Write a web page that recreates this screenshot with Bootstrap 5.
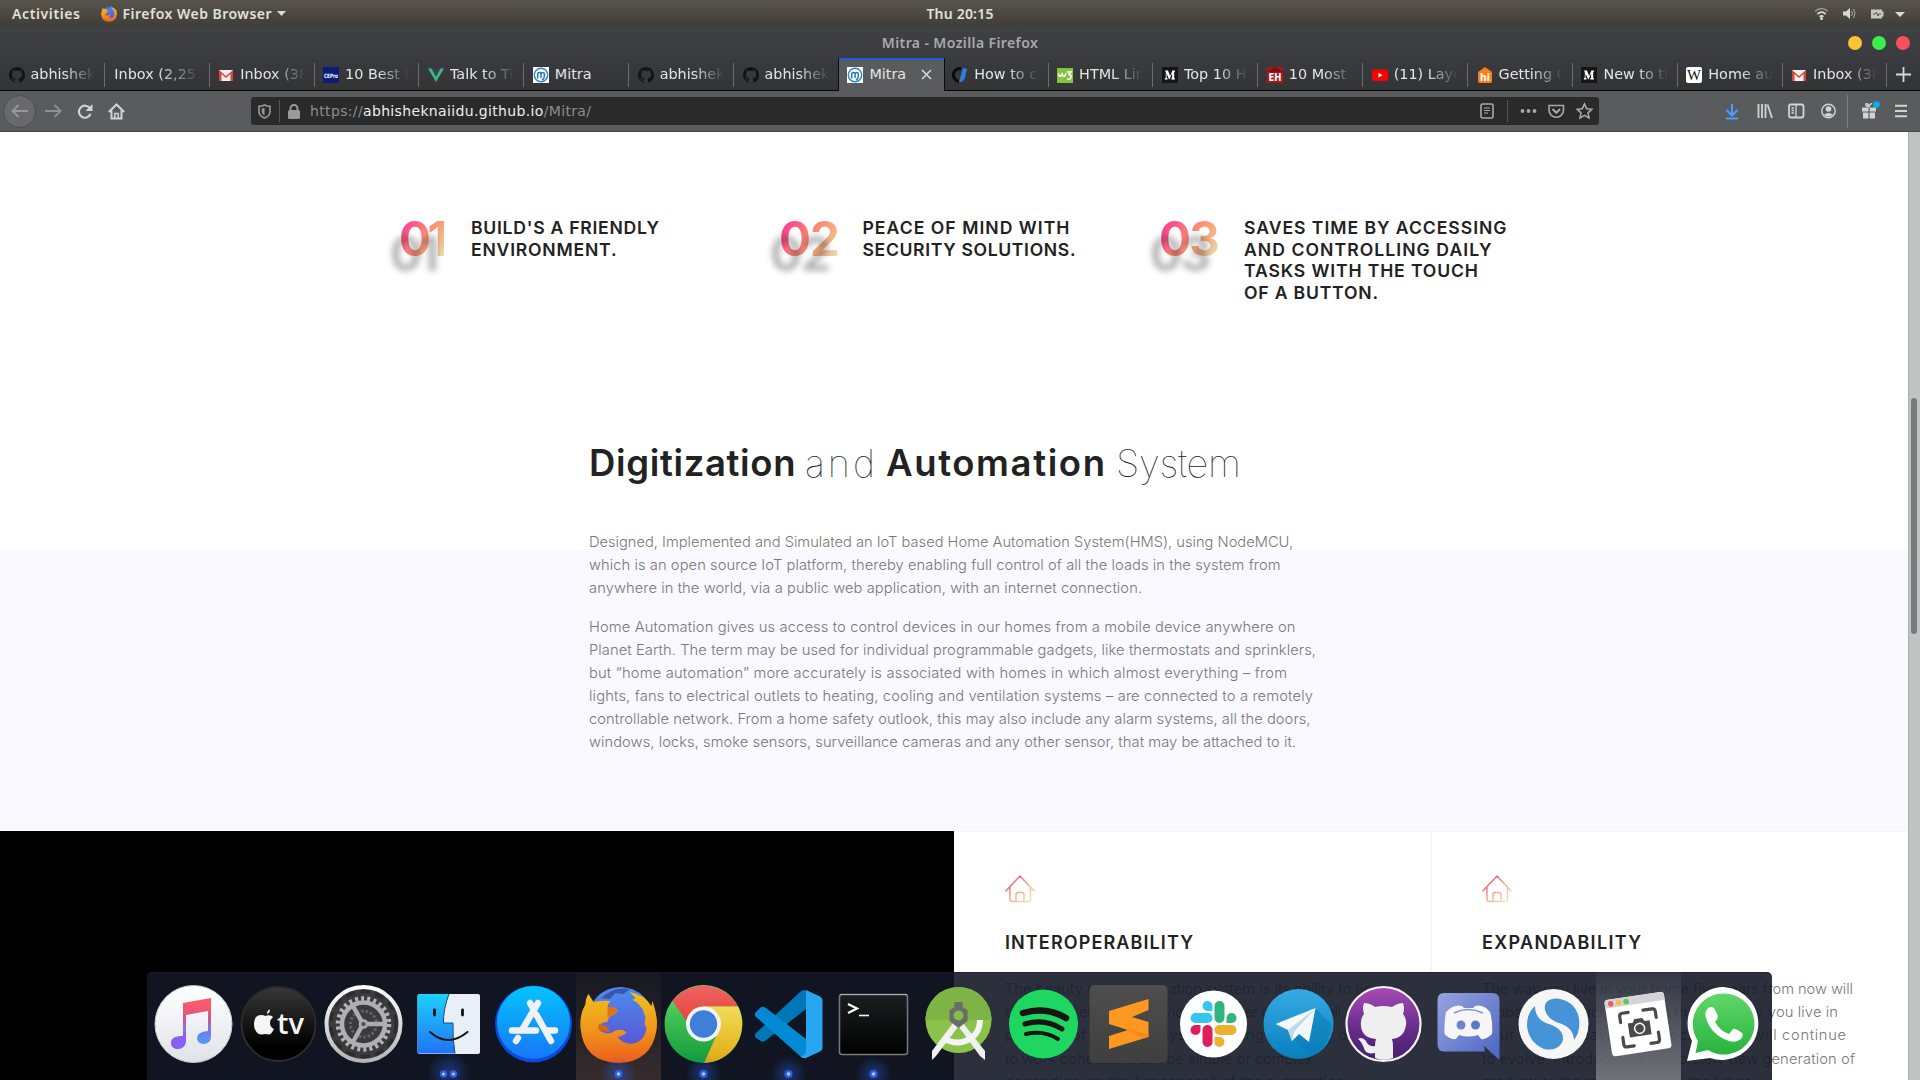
<!DOCTYPE html>
<html lang="en">
<head>
<meta charset="utf-8">
<title>Mitra - Mozilla Firefox</title>
<link href="https://cdn.jsdelivr.net/npm/bootstrap@5.3.0/dist/css/bootstrap.min.css" rel="stylesheet">
<style>
  body{width:1920px;height:1080px;overflow:hidden;font-family:"DejaVu Sans",sans-serif;background:#fff}
  svg{display:block;flex:none}
  .fit{display:inline-block;white-space:nowrap}
  .sysbar{height:27px;background:linear-gradient(#58544c,#3f3d37);color:#e2e0db;font:600 14px/27px "Noto Sans",sans-serif}
  .titlebar{height:31px;background:linear-gradient(#3f4145,#3a3b3f);color:#a9a9a7;font:600 14px/31px "Noto Sans",sans-serif}
  .side{flex:1 1 0;min-width:0}
  .windot{width:14px;height:14px;border-radius:50%}
  .tabstrip{height:33px;background:linear-gradient(#3a3b3f,#343437);border-bottom:1px solid #050505;color:#e4e4e2;font-size:14.4px}
  .tabitem{width:104.87px;height:32px;padding:1px 10px 0 8.5px;position:relative;flex:none}
  .tabitem::after{content:"";position:absolute;right:0;top:5px;bottom:3px;width:1px;background:#6b6c6e}
  .tabitem.on{background:#5a5b5d;height:33px;padding-top:0;box-shadow:inset 0 2px #2259d8,-1px 0 #0c0c0c,1px 0 #0c0c0c}
  .tabitem.on::after,.tabitem.quiet::after{display:none}
  .tablabel{margin-left:6px;white-space:nowrap;overflow:hidden;flex:1 1 0;line-height:31px;
    -webkit-mask-image:linear-gradient(90deg,#000 52%,transparent 100%);mask-image:linear-gradient(90deg,#000 52%,transparent 100%)}
  .tablabel.full{-webkit-mask-image:none;mask-image:none}
  .toolbar{height:41px;background:#5a5b5d;border-bottom:1px solid #47474a;color:#cfcfcf}
  .backbtn{width:33px;height:33px;border-radius:50%;background:#69696b;border:1px solid #4b4b4d}
  .urlbox{width:1348px;height:28px;background:#2a2a2a;border-radius:3px;color:#8d8d8d;font-size:14px}
  .urlbox b{font-weight:400;color:#eee}
  .vline{width:1px;background:#555}
  .viewport{height:948px;overflow:hidden;font-family:Inter,sans-serif}
  .page{width:1908px}
  .scroller{width:12px;background:#c1c3c2;border-left:1px solid #adafae;padding:266px 0 0 2px}
  .thumb{width:6px;height:236px;border-radius:3px;background:#787b7c}
  .steps{height:268px;padding:85px 0 0 401px}
  .step{width:380px}
  .numeral{font-size:47.500px;font-weight:700;line-height:48px;margin-top:-2px;margin-left:-2px;color:transparent;
    background:linear-gradient(125deg,#ff3797 10%,#fb7c78 42%,#f8a67c 65%,#e6e2b4 95%);-webkit-background-clip:text;background-clip:text;
    text-shadow:-9px 15px 6px rgba(0,0,0,.3);flex:none}
  .steptext{font-size:17.600px;font-weight:600;line-height:21.700px;color:#222}
  .about{height:431px;padding:41px 0 0 589px;background:linear-gradient(#fff 149px,#f9f9ff 149px)}
  .headline{font-size:36.500px;line-height:44px;font-weight:600;color:#222;margin:0 0 46px;height:44px;display:flex}
  .headline .thin{font-weight:100;font-size:38px}
  .copy{font-size:14.700px;line-height:23px;font-weight:300;color:#777;margin:0 0 16px}
  .about .copy{position:static}
  .videobox{width:954px;height:249px;background:#000}
  .feature{width:476px;height:249px;border-top:1px solid #f4f4f6;padding:43px 0 0 51px}
  .feature + .feature{width:478px;border-left:2px solid #f6f6f6;padding-left:50px}
  .feature h4{font-size:18px;line-height:22px;font-weight:600;color:#222;margin:29px 0 24px}
  .feature .copy{line-height:23.200px}
  .dock{left:147px;top:972px;width:1625px;height:108px;padding-left:4px;border-radius:5px 5px 0 0;background:rgba(18,24,37,.895);border-top:1px solid rgba(30,30,50,.6)}
  .slot{width:85px;height:108px;flex:none;margin-top:-1px}
  .slot.hot{background:linear-gradient(rgba(80,50,45,.1),rgba(92,66,56,.5))}
  .slot.pale{background:linear-gradient(rgba(130,130,140,.1),rgba(135,135,142,.75))}
</style>
<script src="https://cdn.jsdelivr.net/npm/bootstrap@5.3.0/dist/js/bootstrap.bundle.min.js"></script>
</head>
<body>
<svg width="0" height="0" class="position-absolute">
  <defs>
    <linearGradient id="ffo" x1="0" y1="0" x2="0" y2="1"><stop offset="0" stop-color="#f0c01c"/><stop offset=".5" stop-color="#f09a1c"/><stop offset="1" stop-color="#ee5c1c"/></linearGradient>
    <linearGradient id="ffb" x1="0" y1="0" x2="0" y2="1"><stop offset="0" stop-color="#4b8df0"/><stop offset="1" stop-color="#5b4fd0"/></linearGradient>
    <linearGradient id="warm" x1="0" y1="0" x2="1" y2="1"><stop offset=".1" stop-color="#fb4a84"/><stop offset=".5" stop-color="#f7a584"/><stop offset=".9" stop-color="#efe2c0"/></linearGradient>
    <radialGradient id="halo"><stop offset="0" stop-color="#2f5fe8" stop-opacity=".75"/><stop offset="1" stop-color="#2f5fe8" stop-opacity="0"/></radialGradient>
    <symbol id="octo" viewBox="0 0 16 16"><path d="M8 0C3.58 0 0 3.58 0 8c0 3.54 2.29 6.53 5.47 7.59.4.07.55-.17.55-.38 0-.19-.01-.82-.01-1.49-2.01.37-2.53-.49-2.69-.94-.09-.23-.48-.94-.82-1.13-.28-.15-.68-.52-.01-.53.63-.01 1.08.58 1.23.82.72 1.21 1.87.87 2.33.66.07-.52.28-.87.51-1.07-1.78-.2-3.64-.89-3.64-3.95 0-.87.31-1.59.82-2.15-.08-.2-.36-1.02.08-2.12 0 0 .67-.21 2.2.82.64-.18 1.32-.27 2-.27s1.36.09 2 .27c1.53-1.04 2.2-.82 2.2-.82.44 1.1.16 1.92.08 2.12.51.56.82 1.27.82 2.15 0 3.07-1.87 3.75-3.65 3.95.29.25.54.73.54 1.48 0 1.07-.01 1.93-.01 2.2 0 .21.15.46.55.38A8 8 0 0 0 16 8c0-4.42-3.58-8-8-8z"/></symbol>
    <symbol id="gmail" viewBox="0 0 16 16"><path d="M1 3h14v11H1z" fill="#f1f1f1"/><path d="M1 14V3l7 6 7-6v11h-2.500V7L8 11 3.500 7v7z" fill="#dc4436"/></symbol>
    <symbol id="mitra" viewBox="0 0 16 16"><path d="M0 0h16v16H0z" fill="#fff"/><circle cx="8" cy="8" r="6.700" fill="none" stroke="#2b86c5" stroke-width="1.400"/><path d="M4.700 11.500V7.500Q4.700 5.600 6.400 5.600T8 7.500V11M8 7.500Q8 5.600 9.700 5.600T11.400 7.500V9Q11.400 11.500 9 13" fill="none" stroke="#2277b8" stroke-width="1.500"/></symbol>
    <symbol id="medium" viewBox="0 0 16 16"><path d="M0 0h16v16H0z" fill="#151515"/><path d="M3 3.500h3L8.100 9l2.300-5.500H13v1l-.8.600v6l.8.500v.9H9.200v-.9l.9-.6V6.300L7.600 12.300H7L4.600 6.600v4l1 1.200v.7H2.800v-.7l1-1.200V5.200z" fill="#fff"/></symbol>
    <symbol id="house" viewBox="0 0 30 28"><g fill="none" stroke="url(#warm)" stroke-width="1.500" stroke-linecap="round" stroke-linejoin="round"><path d="M.8 16 15 1 29.200 16M5 12v12.500Q5 26.500 7 26.500H23.500Q25.500 26.500 25.500 24.500V12M11 26V19.500Q11 17.500 13 17.500h4Q19 17.500 19 19.500V26"/></g></symbol>
    <symbol id="fox" viewBox="0 0 78 78"><circle cx="41" cy="34" r="33" fill="url(#ffb)"/><path d="M20 14Q32 0 50 3L44 8 36 7 30 13 22 12z" fill="#3c52ae"/><path d="M9 8 14 16Q24 14 31 15 28 18 28 21 36 21 38 24 38 27 30 31 28 34 28 36 20 36 19 42 22 49 32 47 39 41 47 46 46 49 38 51 42 57 52 58 65 56 67 42L65 38 66 31 63 23 58 17 53 14 56 12 50 6Q64 8 72 20L73 15Q79 32 77 44 72 76 39 77 4 76 1 42 0 28 6 18 6 12 9 8z" fill="url(#ffo)"/><path d="M28 21Q36 20 38 24 37 28 28 32z" fill="#e07414"/><path d="M19 38Q28 38 30 46L19 44z" fill="#dd6512"/></symbol>
  </defs>
</svg>

<header>
  <div class="sysbar d-flex">
    <div class="side d-flex align-items-center">
      <span class="fit" style="margin-left:12px" data-w="68">Activities</span>
      <svg style="margin-left:20px" width="16" height="16" viewBox="0 0 78 78"><use href="#fox"/></svg>
      <span class="fit" style="margin-left:6px" data-w="149">Firefox Web Browser</span>
      <svg style="margin-left:5px" width="9" height="5"><path d="M0 0h9L4.500 5z" fill="#dcdad5"/></svg>
    </div>
    <span class="fit" data-w="67">Thu 20:15</span>
    <div class="side d-flex align-items-center justify-content-end">
      <svg width="106" height="20" viewBox="0 0 106 20"><g fill="none" stroke="#dcdad5" stroke-width="1.600"><path d="M1 7.500Q7.500 1.500 14 7.500" opacity=".5"/><path d="M3.300 10.200Q7.500 6.200 11.700 10.200M5.500 12.800Q7.500 10.800 9.500 12.800"/></g><circle cx="7.500" cy="14.500" r="1.500" fill="#dcdad5"/><path d="M29 7.500h3l4-3.500v11l-4-3.500h-3z" fill="#dcdad5"/><path d="M37.500 7q2 2.500 0 5M39.500 5q3 4.500 0 9" stroke="#b5b3ad" fill="none"/><path d="M57 5.500h11v2h1.500v5H68v2H57z" fill="#c9c7c2"/><path d="M59 10h2l1.500-2 1.500 4 1-2h2" stroke="#55524a" fill="none"/><path d="M81 8h10l-5 5z" fill="#dcdad5"/></svg>
    </div>
  </div>
  <div class="titlebar d-flex">
    <div class="side"></div>
    <span class="fit" data-w="156">Mitra - Mozilla Firefox</span>
    <div class="side d-flex align-items-center justify-content-end" style="gap:10px">
      <i class="windot" style="background:#fbc531"></i><i class="windot" style="background:#3eed4b"></i><i class="windot" style="background:#f7525b;margin-right:10px"></i>
    </div>
  </div>
  <nav class="tabstrip d-flex">
    <div class="tabitem d-flex align-items-center"><svg width="16" height="16" fill="#141416"><use href="#octo"/></svg><span class="tablabel">abhishek</span></div>
    <div class="tabitem d-flex align-items-center"><span class="tablabel" style="margin-left:1px">Inbox (2,251)</span></div>
    <div class="tabitem d-flex align-items-center"><svg width="16" height="16"><use href="#gmail"/></svg><span class="tablabel">Inbox (38)</span></div>
    <div class="tabitem d-flex align-items-center"><svg width="16" height="16"><path d="M0 0h16v16H0z" fill="#0a1e78"/><text x="1" y="10.500" font-size="6" font-weight="700" fill="#fff" textLength="14" lengthAdjust="spacingAndGlyphs">CEPro</text></svg><span class="tablabel">10 Best H</span></div>
    <div class="tabitem d-flex align-items-center"><svg width="16" height="16"><path d="M0 1.500h3.500L8 9.500l4.500-8H16L8 15z" fill="#41b883"/><path d="M3.500 1.500H6.200L8 4.700 9.800 1.500h2.700L8 9.500z" fill="#35495e"/></svg><span class="tablabel">Talk to Ti</span></div>
    <div class="tabitem d-flex align-items-center"><svg width="16" height="16"><use href="#mitra"/></svg><span class="tablabel full">Mitra</span></div>
    <div class="tabitem d-flex align-items-center"><svg width="16" height="16" fill="#141416"><use href="#octo"/></svg><span class="tablabel">abhishek</span></div>
    <div class="tabitem quiet d-flex align-items-center"><svg width="16" height="16" fill="#141416"><use href="#octo"/></svg><span class="tablabel">abhishek</span></div>
    <div class="tabitem on d-flex align-items-center"><svg width="16" height="16"><use href="#mitra"/></svg><span class="tablabel full">Mitra</span><svg width="11" height="11" style="margin-right:2px"><path d="M1 1l9 9M10 1l-9 9" stroke="#d8d8d8" stroke-width="1.500"/></svg></div>
    <div class="tabitem d-flex align-items-center"><svg width="16" height="16"><path d="M9 1.500A6.500 6.500 0 1 0 7 14.500" fill="none" stroke="#0b0b0d" stroke-width="3"/><path d="M11 1 7 15h2.500l3-3 2.500-10q-2-1-4-1z" fill="#2f7de0"/></svg><span class="tablabel">How to cr</span></div>
    <div class="tabitem d-flex align-items-center"><svg width="16" height="16"><path d="M0 1h16v15H0z" fill="#84c341"/><path d="M1.500 6.500Q2 10 4 9L5 7Q6 10 8 9L9 6M10 5h4L12 7.500Q14.500 8 14 10.500 13 13 10 12" fill="none" stroke="#fff" stroke-width="1.500"/></svg><span class="tablabel">HTML Lin</span></div>
    <div class="tabitem d-flex align-items-center"><svg width="16" height="16"><use href="#medium"/></svg><span class="tablabel">Top 10 H</span></div>
    <div class="tabitem d-flex align-items-center"><svg width="16" height="16"><path d="M0 0h16v16H0z" fill="#a91616"/><path d="M0 5 8 0 16 5z" fill="#7d1010"/><text x="1.500" y="13.500" font-size="10.500" font-weight="700" fill="#fff" textLength="13" lengthAdjust="spacingAndGlyphs">EH</text></svg><span class="tablabel">10 Most I</span></div>
    <div class="tabitem d-flex align-items-center"><svg width="16" height="16"><rect y="2.500" width="16" height="11.500" rx="2.500" fill="#f00"/><path d="M6.500 5.800v4.800l4-2.400z" fill="#fff"/></svg><span class="tablabel">(11) Layo</span></div>
    <div class="tabitem d-flex align-items-center"><svg width="16" height="16"><path d="M1 5 8 0l7 5v9q0 2-2 2H3q-2 0-2-2z" fill="#f97f16"/><text x="3" y="13.500" font-size="11" font-weight="700" fill="#fff" textLength="10" lengthAdjust="spacingAndGlyphs">hi</text></svg><span class="tablabel">Getting C</span></div>
    <div class="tabitem d-flex align-items-center"><svg width="16" height="16"><use href="#medium"/></svg><span class="tablabel">New to th</span></div>
    <div class="tabitem d-flex align-items-center"><svg width="16" height="16"><rect width="16" height="16" rx="2" fill="#fff"/><text x="1" y="12.800" font-family="Liberation Serif,serif" font-size="14" fill="#111" textLength="14" lengthAdjust="spacingAndGlyphs">W</text></svg><span class="tablabel">Home aut</span></div>
    <div class="tabitem d-flex align-items-center"><svg width="16" height="16"><use href="#gmail"/></svg><span class="tablabel">Inbox (38)</span></div>
    <div class="d-flex align-items-center" style="padding-left:8.500px"><svg width="15" height="15"><path d="M7.500 0v15M0 7.500h15" stroke="#d8d8d8" stroke-width="1.800"/></svg></div>
  </nav>
  <div class="toolbar d-flex align-items-center">
    <div class="backbtn d-flex align-items-center justify-content-center" style="margin-left:3px"><svg width="17" height="14" fill="none" stroke="#98989a" stroke-width="1.800"><path d="M17 7H1.500M7.500 1l-6 6 6 6"/></svg></div>
    <svg style="margin-left:9px" width="17" height="14" fill="none" stroke="#909092" stroke-width="1.800"><path d="M0 7h15.500M9.500 1l6 6-6 6"/></svg>
    <svg style="margin-left:15px" width="16" height="15" fill="none" stroke="#d3d3d3" stroke-width="2.200"><path d="M13 4.500A6 6 0 1 0 13.500 10"/><path d="M15.500 0v7h-7z" fill="#d3d3d3" stroke="none"/></svg>
    <svg style="margin-left:15px" width="17" height="17" fill="none" stroke="#d3d3d3" stroke-width="2"><path d="M.8 9 8.500 1.500 16.200 9M3.500 7.500V15.500h10V7.500"/><path d="M6.800 15.500v-5h3.400v5" stroke-width="1.500"/></svg>
    <div class="urlbox d-flex align-items-center" style="margin-left:126px">
      <svg style="margin-left:7px" width="13" height="15"><path d="M6.500 1Q9 2.300 12 2.300V7.500Q12 12 6.500 14 1 12 1 7.500V2.300Q4 2.300 6.500 1z" fill="none" stroke="#9a9a9a" stroke-width="1.600"/><path d="M6.500 4v7.500Q3.800 10 3.800 7.500v-3z" fill="#9a9a9a"/></svg>
      <i class="vline" style="height:22px;margin-left:8px"></i>
      <svg style="margin-left:8px" width="12" height="15"><rect y="6" width="12" height="9" rx="1.500" fill="#9a9a9a"/><path d="M2.500 6.500V4.500a3.500 3.500 0 0 1 7 0v2" fill="none" stroke="#9a9a9a" stroke-width="2"/></svg>
      <span class="fit" data-w="281" style="margin-left:10px">https://<b>abhisheknaiidu.github.io</b>/Mitra/</span>
      <svg class="ms-auto me-1" style="margin-right:1px!important" width="118" height="28" fill="none" stroke="#a8a8a8" stroke-width="1.600"><rect x="1" y="7" width="12" height="14" rx="1.500"/><path d="M4 11h6M4 13.500h6M4 16h4" stroke-width="1.200"/><path d="M27.500 3v22" stroke="#555" stroke-width="1"/><g fill="#a8a8a8" stroke="none"><circle cx="42.500" cy="14" r="1.900"/><circle cx="48.500" cy="14" r="1.900"/><circle cx="54.500" cy="14" r="1.900"/></g><path d="M69 8.500h14.500V13a7.250 7.250 0 0 1-14.500 0z"/><path d="M72.500 12l3.800 3.800 3.800-3.800" stroke-width="2"/><path d="M104.500 7l2.200 4.700 5.100.6-3.800 3.500 1 5.100-4.500-2.600-4.500 2.600 1-5.100-3.800-3.500 5.100-.6z"/></svg>
    </div>
    <svg style="margin-left:126px" width="190" height="40" fill="none" stroke="#d3d3d3" stroke-width="1.800"><path d="M7 13v11M1.500 19l5.500 5.500 5.500-5.500" stroke="#45a1ff" stroke-width="2"/><path d="M1 27.500h12" stroke="#45a1ff" stroke-width="2"/><path d="M33.500 13v14M37 13v14M40.500 13v14M42.500 13.500l4.500 13.500" stroke-width="1.800"/><rect x="64" y="13.500" width="14.500" height="13" rx="2"/><path d="M71 13v14M66.500 17h2.500M66.500 19.500h2.500M66.500 22h2.500" stroke-width="1.300"/><circle cx="103.500" cy="20" r="6.700" stroke-width="1.400"/><circle cx="103.500" cy="18" r="2.800" fill="#d3d3d3" stroke="none"/><path d="M99 23.500q4.500-3 9 0-4.500 4.500-9 0z" fill="#d3d3d3" stroke="none"/><path d="M122.500 4v33" stroke="#7d7d7f" stroke-width="1"/><g fill="#d3d3d3" stroke="none"><path d="M137 16.500h6.400v4H137zM144.600 16.500h6.400v4h-6.400zM138 21.500h5.400v6H138zM144.600 21.500h5.400v6h-5.400z"/></g><path d="M144 16q-4-1-3-3 2-1 3 3 1-4 3-3" stroke-width="1.500"/><circle cx="151.500" cy="13.500" r="3.300" fill="#00aff5" stroke="none"/><path d="M170 14.800h12M170 20h12M170 25.200h12" stroke-width="2"/></svg>
  </div>
</header>

<main class="viewport d-flex">
  <div class="page">
    <section class="steps d-flex">
      <div class="step d-flex"><div style="width:70px"><span class="numeral fit" data-w="49">01</span></div>
        <div class="steptext"><span class="fit" data-w="188">BUILD'S A FRIENDLY</span><br><span class="fit" data-w="145.500">ENVIRONMENT.</span></div></div>
      <div class="step d-flex"><div style="width:81.500px"><span class="numeral fit" data-w="61">02</span></div>
        <div class="steptext"><span class="fit" data-w="207">PEACE OF MIND WITH</span><br><span class="fit" data-w="213">SECURITY SOLUTIONS.</span></div></div>
      <div class="step d-flex"><div style="width:83px"><span class="numeral fit" data-w="61">03</span></div>
        <div class="steptext"><span class="fit" data-w="262.500">SAVES TIME BY ACCESSING</span><br><span class="fit" data-w="247.500">AND CONTROLLING DAILY</span><br><span class="fit" data-w="234">TASKS WITH THE TOUCH</span><br><span class="fit" data-w="134">OF A BUTTON.</span></div></div>
    </section>
    <section class="about">
      <h2 class="headline"><span class="fit" data-w="206.500" style="width:216px">Digitization</span><span class="fit thin" data-w="70" style="width:81px">and</span><span class="fit" data-w="219" style="width:230px">Automation</span><span class="fit thin" data-w="125">System</span></h2>
      <p class="copy"><span class="fit" data-w="704">Designed, Implemented and Simulated an IoT based Home Automation System(HMS), using NodeMCU,</span><br><span class="fit" data-w="691.500">which is an open source IoT platform, thereby enabling full control of all the loads in the system from</span><br><span class="fit" data-w="553">anywhere in the world, via a public web application, with an internet connection.</span></p>
      <p class="copy"><span class="fit" data-w="706.500">Home Automation gives us access to control devices in our homes from a mobile device anywhere on</span><br><span class="fit" data-w="727">Planet Earth. The term may be used for individual programmable gadgets, like thermostats and sprinklers,</span><br><span class="fit" data-w="698">but “home automation” more accurately is associated with homes in which almost everything – from</span><br><span class="fit" data-w="724">lights, fans to electrical outlets to heating, cooling and ventilation systems – are connected to a remotely</span><br><span class="fit" data-w="721.500">controllable network. From a home safety outlook, this may also include any alarm systems, all the doors,</span><br><span class="fit" data-w="707">windows, locks, smoke sensors, surveillance cameras and any other sensor, that may be attached to it.</span></p>
    </section>
    <section class="d-flex">
      <div class="videobox"></div>
      <article class="feature">
        <svg width="30" height="28"><use href="#house"/></svg>
        <h4><span class="fit" data-w="188">INTEROPERABILITY</span></h4>
        <p class="copy"><span class="fit" data-w="367">The beauty of an automation system is its ability to tie</span><br><span class="fit" data-w="336">connected electronic devices together or so that all</span><br><span class="fit" data-w="388">products of the home system, letting the many devices</span><br><span class="fit" data-w="312">to work cohesively can be simple or complex,</span><br><span class="fit" data-w="340">depending on the "openness" of the automation</span></p>
      </article>
      <article class="feature">
        <svg width="30" height="28"><use href="#house"/></svg>
        <h4><span class="fit" data-w="159">EXPANDABILITY</span></h4>
        <p class="copy"><span class="fit" data-w="371">The way you live in your home five years from now will</span><br><span class="fit" data-w="356">probably be much different than the way you live in</span><br><span class="fit" data-w="364">your home today. Home technology will continue</span><br><span class="fit" data-w="373">to evolve, introducing a completely new generation of</span><br><span class="fit" data-w="270">products to the marketplace. In the future</span></p>
      </article>
    </section>
  </div>
  <div class="scroller"><div class="thumb"></div></div>
</main>

<nav class="dock d-flex position-absolute">
  <div class="slot"><svg width="85" height="108">
    <defs><linearGradient id="m1" x1="0" y1="0" x2="0" y2="1"><stop offset="0" stop-color="#fff"/><stop offset="1" stop-color="#dfe3e8"/></linearGradient><linearGradient id="m2" x1="0" y1="26" x2="0" y2="77" gradientUnits="userSpaceOnUse"><stop offset=".1" stop-color="#fb5b68"/><stop offset=".4" stop-color="#d4568c"/><stop offset=".65" stop-color="#6f7df0"/><stop offset="1" stop-color="#4aa4f5"/></linearGradient></defs>
    <circle cx="42.500" cy="52" r="38.500" fill="url(#m1)" stroke="#c6cbd1" stroke-width="1"/><path d="M32 31 60 26V64Q60 72 52 72 46 71 46 66 46 60 57 59V39L35 43V69Q34 77 26 77 20 76 20 71 20 64 32 64z" fill="url(#m2)"/><path d="M32 64V60H35V69Q34 77 26 77 20 76 20 71 20 64 32 64z" fill="#8a60f4"/></svg></div>
  <div class="slot"><svg width="85" height="108"><defs><linearGradient id="tv" x1="0" y1="0" x2="0" y2="1"><stop offset="0" stop-color="#383838"/><stop offset=".8" stop-color="#000"/></linearGradient></defs><circle cx="42.500" cy="52" r="37" fill="url(#tv)" stroke="#2c2c2e" stroke-width="2"/><path d="M31 42Q31 38 34 37.500 34 41 31 42zM18 53Q18 43 25 43 28 43 29.500 44 32 42.500 36 44L37 45.500Q34 47 34 51 34 55 38 57 35 63 32.500 62.500 29 61.500 26 62.500 23 63 20.500 60 18 57 18 53z" fill="#f5f5f5"/><text x="41" y="62" font-family="Open Sans,sans-serif" font-size="29" font-weight="600" fill="#f5f5f5" textLength="27" lengthAdjust="spacingAndGlyphs">tv</text></svg></div>
  <div class="slot"><svg width="85" height="108"><defs><linearGradient id="rg" x1="0" y1="0" x2="0" y2="1"><stop offset="0" stop-color="#fff"/><stop offset="1" stop-color="#b5b5b5"/></linearGradient></defs><circle cx="42.500" cy="52" r="37" fill="#3b3b3d" stroke="url(#rg)" stroke-width="4"/><circle cx="42.500" cy="52" r="32.500" fill="none" stroke="#2c2c2e" stroke-width="3" stroke-dasharray="9 6"/><circle cx="42.500" cy="52" r="13" fill="none" stroke="#626264" stroke-width="3" stroke-dasharray="2.500 2"/><circle cx="42.500" cy="52" r="25.500" fill="none" stroke="#b4b4b4" stroke-width="4.500" stroke-dasharray="3 3.160"/><circle cx="42.500" cy="52" r="21.500" fill="none" stroke="#b0b0b0" stroke-width="4.500"/><path d="M43 52H64M42 52 32 34M42 52 32 70" stroke="#adadad" stroke-width="4.500"/><circle cx="42.500" cy="52" r="3.600" fill="#59595b" stroke="#adadad" stroke-width="2.500"/></svg></div>
  <div class="slot"><svg width="85" height="108"><defs><linearGradient id="fn" x1="0" y1="0" x2="0" y2="1"><stop offset="0" stop-color="#1dd0fc"/><stop offset="1" stop-color="#2173f6"/></linearGradient></defs><rect x="11.500" y="22" width="62.500" height="60" rx="2" fill="#e9eff6"/><path d="M13 22H43Q37 38 37.500 51H47Q46.500 68 49 81.500H13Q11.500 81.500 11.500 80V23.500Q11.500 22 13 22z" fill="url(#fn)"/><path d="M43 22Q37 38 37.500 51H47Q46.500 68 49 81.500" fill="none" stroke="#1b4b78" stroke-width="1"/><path d="M28.500 38v5M56.500 38v5" stroke="#111" stroke-width="2.800" stroke-linecap="round"/><path d="M24 60Q42 76 61.500 60" fill="none" stroke="#111" stroke-width="2" stroke-linecap="round"/><circle cx="42.500" cy="101" r="22" fill="url(#halo)" opacity=".6"/><circle cx="37.500" cy="102" r="3.700" fill="#2c5fe0"/><circle cx="37.500" cy="102" r="1.600" fill="#a9c6ff"/><circle cx="47.500" cy="102" r="3.700" fill="#2c5fe0"/><circle cx="47.500" cy="102" r="1.600" fill="#a9c6ff"/></svg></div>
  <div class="slot"><svg width="85" height="108"><defs><linearGradient id="as" x1="0" y1="0" x2="0" y2="1"><stop offset="0" stop-color="#04c4fe"/><stop offset="1" stop-color="#1677f7"/></linearGradient></defs><circle cx="42.500" cy="52" r="38.500" fill="#0d49dc"/><circle cx="42.500" cy="50.500" r="36.500" fill="url(#as)"/><g stroke="#eef1f6" stroke-width="6.500" stroke-linecap="round"><path d="M47 31 31 58M27 66 25 69"/><path d="M39 31 43 38M45.500 43 60 69"/><path d="M21 58.500H45M55 58.500H64"/></g></svg></div>
  <div class="slot hot"><svg width="85" height="108"><use href="#fox" x="3.500" y="14" width="78" height="78"/><circle cx="42.500" cy="102" r="18" fill="url(#halo)" opacity=".6"/><circle cx="42.500" cy="102" r="4" fill="#2c5fe0"/><circle cx="42.500" cy="102" r="1.800" fill="#a9c6ff"/></svg></div>
  <div class="slot"><svg width="85" height="108"><defs><linearGradient id="c1" x1="0" y1="0" x2="0" y2="1"><stop offset="0" stop-color="#ef6462"/><stop offset="1" stop-color="#e5443b"/></linearGradient><linearGradient id="c2" x1="0" y1="0" x2="0" y2="1"><stop offset="0" stop-color="#64dc62"/><stop offset="1" stop-color="#119a3d"/></linearGradient><linearGradient id="c3" x1="0" y1="0" x2="0" y2="1"><stop offset="0" stop-color="#f2dc57"/><stop offset="1" stop-color="#e2a912"/></linearGradient></defs><circle cx="42.500" cy="52" r="39" fill="url(#c2)"/><path d="M11.500 29A39 39 0 0 1 77 34.500H42.500L25.500 49z" fill="url(#c1)"/><path d="M77 34.500A39 39 0 0 1 43 91L56.500 61 42.500 34.500z" fill="url(#c3)"/><circle cx="42.500" cy="52" r="17.500" fill="#f3f5fa"/><circle cx="42.500" cy="52" r="13.700" fill="#3f7fda"/><circle cx="42.500" cy="102" r="18" fill="url(#halo)" opacity=".6"/><circle cx="42.500" cy="102" r="4" fill="#2c5fe0"/><circle cx="42.500" cy="102" r="1.800" fill="#a9c6ff"/></svg></div>
  <div class="slot"><svg width="85" height="108"><path d="M9 62 54 20Q57 17 60 18.500V37L19 69Q16 71 13 68L9 65z" fill="#0277b8"/><path d="M9 41 13 37Q16 33 20 36L60 67V86Q57 86 54 84L9 44z" fill="#0489d4"/><path d="M60 18 74 24.500Q76.500 26 76.500 28V76Q76.500 78 74 79.500L60 86Q57 87 54 84 60 84 60 78z" fill="#27a6f1"/><circle cx="42.500" cy="102" r="18" fill="url(#halo)" opacity=".6"/><circle cx="42.500" cy="102" r="4" fill="#2c5fe0"/><circle cx="42.500" cy="102" r="1.800" fill="#a9c6ff"/></svg></div>
  <div class="slot"><svg width="85" height="108"><defs><linearGradient id="tm" x1="0" y1="0" x2="0" y2="1"><stop offset="0" stop-color="#1d1e20"/><stop offset="1" stop-color="#000"/></linearGradient></defs><rect x="8.500" y="22.500" width="68" height="60" rx="2.500" fill="url(#tm)" stroke="#777b80" stroke-width="1.500"/><path d="M9 22.500H76" stroke="#aeb3b8"/><path d="M17 32 26 36.500 17 41" fill="none" stroke="#fff" stroke-width="2.200"/><path d="M28 43.500H38" stroke="#fff" stroke-width="1.600"/><circle cx="42.500" cy="102" r="18" fill="url(#halo)" opacity=".6"/><circle cx="42.500" cy="102" r="4" fill="#2c5fe0"/><circle cx="42.500" cy="102" r="1.800" fill="#a9c6ff"/></svg></div>
  <div class="slot"><svg width="85" height="108"><circle cx="42.500" cy="48" r="33" fill="#8bc34a"/><path d="M9.500 48A33 33 0 0 1 75.500 48z" fill="#7eb345"/><path d="M37 51 16 79V88L20 84 42 55zM47 51 69 79V88L64 84 43 55z" fill="#f0f0f0"/><path d="M27 66Q42 75 55 66 64 60 64 48" fill="none" stroke="#f4f4f4" stroke-width="6"/><path d="M38.500 30h8v5l5 3v11l-9 7-9-7V38l5-3z" fill="#6b6b6d"/><circle cx="42.500" cy="43.500" r="5" fill="#86bb49"/></svg></div>
  <div class="slot"><svg width="85" height="108"><circle cx="42.500" cy="52" r="34.500" fill="#1ed760"/><g fill="none" stroke="#191414" stroke-linecap="round"><path d="M22 41Q45 34 65 46" stroke-width="6.500"/><path d="M24 52Q44 46 61 57" stroke-width="5"/><path d="M25 62Q43 58 57 67" stroke-width="4"/></g></svg></div>
  <div class="slot"><svg width="85" height="108"><defs><linearGradient id="sb" x1="0" y1="0" x2="0" y2="1"><stop offset="0" stop-color="#4e4e4e"/><stop offset="1" stop-color="#3f3f3f"/></linearGradient></defs><rect x="3.500" y="13" width="78" height="78" rx="5" fill="url(#sb)"/><path d="M23 39 62.500 27V38L46 45 62.500 50V65L23 77V64L42 58 23 52z" fill="#ff9820"/><path d="M37 56 56 66 62.500 65V62z" fill="#f08c18"/></svg></div>
  <div class="slot"><svg width="85" height="108"><circle cx="42.500" cy="52" r="33.500" fill="#fff"/><g stroke-width="10" stroke-linecap="round"><path d="M24.500 46H36.500" stroke="#36c5f0"/><path d="M48.500 34V46" stroke="#2eb67d"/><path d="M48.500 58H60.500" stroke="#ecb22e"/><path d="M36.500 58V70" stroke="#e01e5a"/></g><path d="M41.500 39H36.500a5 5 0 1 1 5-5z" fill="#36c5f0"/><path d="M55.500 51V46a5 5 0 1 1 5 5z" fill="#2eb67d"/><path d="M43.500 65H48.500a5 5 0 1 1-5 5z" fill="#ecb22e"/><path d="M29.500 53V58a5 5 0 1 1-5-5z" fill="#e01e5a"/></svg></div>
  <div class="slot"><svg width="85" height="108"><defs><linearGradient id="tg" x1="0" y1="0" x2="0" y2="1"><stop offset="0" stop-color="#36aae4"/><stop offset="1" stop-color="#0880be"/></linearGradient></defs><circle cx="42.500" cy="52" r="35" fill="url(#tg)"/><path d="M59 36 76 53Q72 75 55 84L37 67z" fill="#0878b4" opacity=".45"/><path d="M19.500 52 59.500 36 53 70 43 62 36 69 32 58z" fill="#f3f8fc"/><path d="M32 58 59 37 38 60 36 69z" fill="#c4d8e8"/></svg></div>
  <div class="slot"><svg width="85" height="108"><defs><linearGradient id="gh" x1="0" y1="0" x2="0" y2="1"><stop offset="0" stop-color="#a94bb6"/><stop offset=".6" stop-color="#632a88"/><stop offset="1" stop-color="#44206f"/></linearGradient></defs><circle cx="42.500" cy="52" r="37" fill="url(#gh)" stroke="#f4f4f4" stroke-width="2.200"/><path d="M23 31Q29 31 34 35 42 33 51 35 57 31 62 31 64 37 62 42 66 47 65 53 63 66 51 67 52 70 52 75V86Q43 90 34 86V81Q24 83 23 76 20 69 17 67 21 64 25 69 27 75 34 74 34 70 35 67 21 66 20 54 19 47 23 42 21 36 23 31z" fill="#efefef"/></svg></div>
  <div class="slot"><svg width="85" height="108"><defs><linearGradient id="dc" x1="0" y1="0" x2="1" y2="1"><stop offset="0" stop-color="#95a3df"/><stop offset="1" stop-color="#4b66c2"/></linearGradient></defs><path d="M18 21H66Q73.500 21 73.500 28V88L58 74 59 79.500H18Q11.500 79.500 11.500 72V28Q11.500 21 18 21z" fill="url(#dc)"/><path d="M20 40Q28 32 36 34L38 36H47L49 34Q57 32 64 40 67 50 66 62 60 68 55 67L52 63Q42 66 33 63L30 67Q24 68 18.500 62 18 50 20 40z" fill="#f6f6f8"/><circle cx="35" cy="53" r="4.500" fill="#7083cf"/><circle cx="49.500" cy="53" r="4.500" fill="#6277c8"/><path d="M28 41Q42 34 57 41" fill="none" stroke="#8090d6" stroke-width="1.500"/></svg></div>
  <div class="slot"><svg width="85" height="108"><circle cx="42.500" cy="52" r="35" fill="#f6f6f6"/><path d="M34 38Q32 28 44 26.500 61 27 67 42 71 58 63 68 62 54 45 50 36 46 34 38z" fill="#4793d8"/><path d="M24 34Q24 48 38 52 53 57 52 68 48 80 33 77 17 70 16 53 16 41 24 34z" fill="#4793d8"/></svg></div>
  <div class="slot pale"><svg width="85" height="108"><g transform="rotate(-8.500 42.500 52)"><rect x="12" y="23.500" width="60" height="57" rx="3.500" fill="#fff"/><path d="M15 23.500H69Q72 23.500 72 27V32H12V27Q12 23.500 15 23.500z" fill="#d4d4d8"/><circle cx="18" cy="28" r="2.800" fill="#ee6157"/><circle cx="26" cy="28" r="2.800" fill="#f5bd4a"/><circle cx="33.500" cy="28" r="2.800" fill="#64c454"/><path d="M25 48V42Q25 39 28 39H34M49 39H58Q61 39 61 42V48M61 63V70Q61 73 58 73H52M35 73H28Q25 73 25 70V63" fill="none" stroke="#4a4a4a" stroke-width="3.200" stroke-linecap="round"/><path d="M32 50H37L39 46.500H47L49 50H54V64H32z" fill="#4a4a4a"/><circle cx="43" cy="56.500" r="5" fill="#4a4a4a" stroke="#fff" stroke-width="1.500"/></g></svg></div>
  <div class="slot"><svg width="85" height="108"><defs><linearGradient id="wa" x1="0" y1="0" x2="0" y2="1"><stop offset="0" stop-color="#5fd769"/><stop offset="1" stop-color="#27b43e"/></linearGradient></defs><path d="M42.500 15A36.500 36.500 0 1 1 29 86L6 89 11 69A36.500 36.500 0 0 1 42.500 15z" fill="#fff"/><path d="M42.500 21.500A30.500 30.500 0 1 1 27 78L14.500 81 17 69A30.500 30.500 0 0 1 42.500 21.500z" fill="url(#wa)"/><path d="M27 36Q30 34 33 36L37 44Q37 47 34 50 39 59 48 62L52 57Q54 56 61 61 63 62 60 67 55 71 48 69 30 63 25 46 23 40 27 36z" fill="#fff"/></svg></div>
</nav>

<script>
  // Track out each text run to the measure given in data-w
  document.querySelectorAll('.fit[data-w]').forEach(function (el) {
    var r = document.createRange();
    r.selectNodeContents(el);
    var w = r.getBoundingClientRect().width, n = el.textContent.length;
    el.style.letterSpacing = ((parseFloat(el.dataset.w) - w) / (n - 1)).toFixed(3) + 'px';
  });
</script>
</body>
</html>
